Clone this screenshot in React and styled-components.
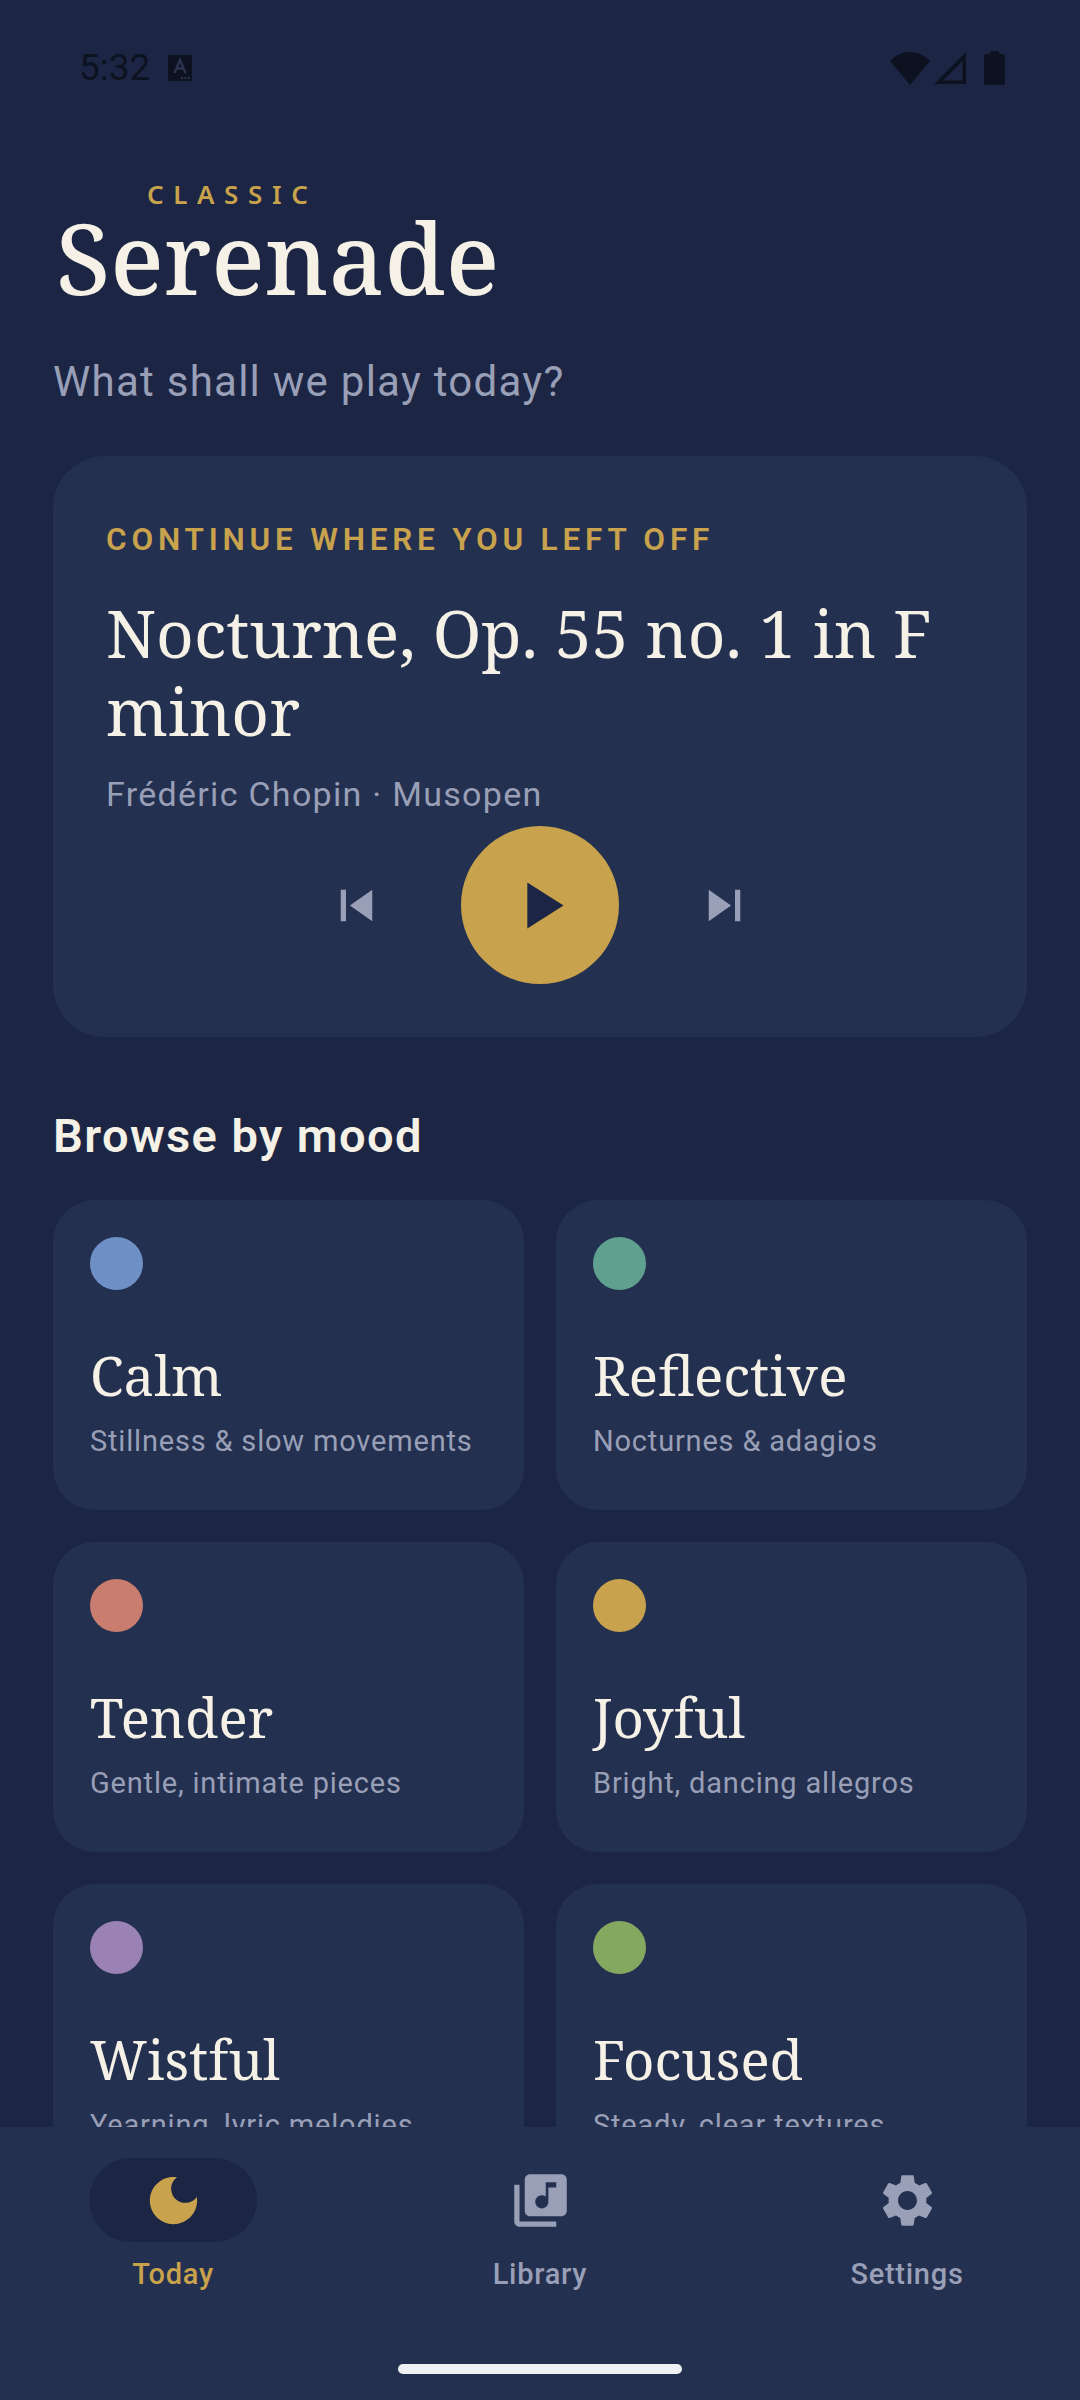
import React from 'react';
import styled, { createGlobalStyle } from 'styled-components';

const GlobalStyle = createGlobalStyle`
    html, body { margin: 0; padding: 0; background: #1c2644; }
    * { box-sizing: border-box; }
`;

const SERIF = `"Noto Serif", "DejaVu Serif", serif`;
const SANS = `Roboto, "Noto Sans", sans-serif`;
const GOLD = '#c8a24c';
const CREAM = '#f5f1e6';
const MUTED = '#989fb6';
const BG = '#1c2644';
const PANEL = '#243050';

const Screen = styled.div`
    width: 1080px;
    height: 2400px;
    background: ${BG};
    display: flex;
    flex-direction: column;
    overflow: hidden;
    font-family: ${SANS};
`;

const Scroll = styled.div`
    flex: 1;
    min-height: 0;
    overflow: hidden;
    padding: 0 53px;
`;

const StatusBar = styled.div`
    height: 179px;
    margin: 0 -53px;
    padding: 46px 75px 0 79px;
    display: flex;
    justify-content: space-between;
    align-items: flex-start;
    color: #0d1220;
`;

const StatusLeft = styled.div`
    display: flex;
    align-items: center;
    gap: 18px;
    font-size: 37px;
    line-height: 44px;
`;

const StatusRight = styled.div`
    padding-top: 5px;
    display: flex;
    align-items: center;
`;

const Eyebrow = styled.div`
    margin-left: 94px;
    font-family: "Noto Sans", Roboto, sans-serif;
    font-size: 26px;
    line-height: 31px;
    font-weight: 600;
    letter-spacing: 0.37em;
    color: ${GOLD};
`;

const Title = styled.h1`
    margin: 2px 0 0 3px;
    font-family: ${SERIF};
    font-weight: 500;
    font-size: 98px;
    line-height: 90px;
    color: ${CREAM};
`;

const Subtitle = styled.p`
    margin: 52px 0 0;
    font-size: 42px;
    line-height: 56px;
    letter-spacing: 0.03em;
    color: ${MUTED};
`;

const HeroCard = styled.section`
    margin-top: 46px;
    height: 581px;
    padding: 63px 53px 0;
    background: ${PANEL};
    border-radius: 52px;
`;

const HeroLabel = styled.div`
    font-size: 31.5px;
    line-height: 42px;
    font-weight: 600;
    letter-spacing: 0.152em;
    color: ${GOLD};
`;

const HeroTitle = styled.h2`
    margin: 33px 0 0;
    font-family: ${SERIF};
    font-weight: 400;
    font-size: 65.6px;
    line-height: 78px;
    color: ${CREAM};
`;

const HeroMeta = styled.div`
    margin-top: 21px;
    font-size: 34px;
    line-height: 46px;
    letter-spacing: 0.038em;
    color: ${MUTED};
`;

const Controls = styled.div`
    margin-top: 9px;
    display: flex;
    justify-content: center;
    align-items: center;
    gap: 42px;
`;

const SkipButton = styled.div`
    width: 126px;
    height: 126px;
    display: flex;
    align-items: center;
    justify-content: center;
    color: ${MUTED};
`;

const PlayButton = styled.div`
    width: 158px;
    height: 158px;
    border-radius: 50%;
    background: ${GOLD};
    color: ${BG};
    display: flex;
    align-items: center;
    justify-content: center;
`;

const SectionTitle = styled.h3`
    margin: 69px 0 0;
    font-size: 47px;
    line-height: 60px;
    font-weight: 600;
    letter-spacing: 0.03em;
    color: ${CREAM};
`;

const MoodGrid = styled.div`
    margin-top: 34px;
    display: grid;
    grid-template-columns: 1fr 1fr;
    gap: 32px;
`;

const MoodCard = styled.div`
    height: 310px;
    padding: 37px;
    background: ${PANEL};
    border-radius: 42px;
`;

const Dot = styled.div`
    width: 53px;
    height: 53px;
    border-radius: 50%;
    background: ${p => p.$color};
`;

const MoodName = styled.div`
    margin-top: 50px;
    font-family: ${SERIF};
    font-size: 54.5px;
    line-height: 70px;
    color: ${CREAM};
`;

const MoodHint = styled.div`
    margin-top: 11px;
    font-size: 29px;
    line-height: 40px;
    letter-spacing: 0.028em;
    color: ${MUTED};
`;

const BottomNav = styled.nav`
    flex: none;
    height: 273px;
    background: ${PANEL};
    display: flex;
    flex-direction: column;
`;

const NavRow = styled.div`
    padding: 31px 89px 0;
    display: flex;
    justify-content: space-between;
`;

const NavItem = styled.div`
    width: 168px;
    display: flex;
    flex-direction: column;
    align-items: center;
    color: ${p => (p.$active ? GOLD : MUTED)};
`;

const IconPill = styled.div`
    width: 168px;
    height: 84px;
    border-radius: 42px;
    background: ${p => (p.$active ? BG : 'transparent')};
    display: flex;
    align-items: center;
    justify-content: center;
`;

const NavLabel = styled.div`
    margin-top: 12px;
    white-space: nowrap;
    font-size: 29px;
    line-height: 40px;
    font-weight: 500;
    letter-spacing: 0.025em;
`;

const HomeBar = styled.div`
    width: 284px;
    height: 10px;
    margin: 70px auto 0;
    border-radius: 5px;
    background: #eff1f3;
`;

const Icon = ({ size = 63, d }) => (
    <svg width={size} height={size} viewBox="0 0 24 24" fill="currentColor"><path d={d} /></svg>
);

const ICONS = {
    prev: 'M6 6h2v12H6zm3.5 6l8.5 6V6z',
    next: 'M6 18l8.5-6L6 6v12zM16 6v12h2V6h-2z',
    play: 'M8 5v14l11-7z',
    moon: 'M12 3c-4.97 0-9 4.03-9 9s4.03 9 9 9 9-4.03 9-9c0-.46-.04-.92-.1-1.36-.98 1.37-2.58 2.26-4.4 2.26-2.98 0-5.4-2.42-5.4-5.4 0-1.81.89-3.42 2.26-4.4-.44-.06-.9-.1-1.36-.1z',
    library: 'M20 2H8c-1.1 0-2 .9-2 2v12c0 1.1.9 2 2 2h12c1.1 0 2-.9 2-2V4c0-1.1-.9-2-2-2zm-2 5h-3v5.5c0 1.38-1.12 2.5-2.5 2.5S10 13.88 10 12.5s1.12-2.5 2.5-2.5c.57 0 1.08.19 1.5.51V5h4v2zM4 6H2v14c0 1.1.9 2 2 2h14v-2H4V6z',
    settings: 'M19.14 12.94c.04-.3.06-.61.06-.94 0-.32-.02-.64-.07-.94l2.03-1.58c.18-.14.23-.41.12-.61l-1.92-3.32c-.12-.22-.37-.29-.59-.22l-2.39.96c-.5-.38-1.03-.7-1.62-.94L14.4 2.81c-.04-.24-.24-.41-.48-.41h-3.84c-.24 0-.43.17-.47.41L9.25 5.35c-.59.24-1.13.57-1.62.94l-2.39-.96c-.22-.08-.47 0-.59.22L2.74 8.87c-.12.21-.08.47.12.61l2.03 1.58c-.05.3-.09.63-.09.94s.02.64.07.94l-2.03 1.58c-.18.14-.23.41-.12.61l1.92 3.32c.12.22.37.29.59.22l2.39-.96c.5.38 1.03.7 1.62.94l.36 2.54c.05.24.24.41.48.41h3.84c.24 0 .44-.17.47-.41l.36-2.54c.59-.24 1.13-.56 1.62-.94l2.39.96c.22.08.47 0 .59-.22l1.92-3.32c.12-.22.07-.47-.12-.61l-2.01-1.58zM12 15.6c-1.98 0-3.6-1.62-3.6-3.6s1.62-3.6 3.6-3.6 3.6 1.62 3.6 3.6-1.62 3.6-3.6 3.6z',
};

const moods = [
    { name: 'Calm', hint: 'Stillness & slow movements', color: '#6f8fc7' },
    { name: 'Reflective', hint: 'Nocturnes & adagios', color: '#5fa08f' },
    { name: 'Tender', hint: 'Gentle, intimate pieces', color: '#c97d6e' },
    { name: 'Joyful', hint: 'Bright, dancing allegros', color: '#c8a24c' },
    { name: 'Wistful', hint: 'Yearning, lyric melodies', color: '#9a82b5' },
    { name: 'Focused', hint: 'Steady, clear textures', color: '#84a860' },
];

const tabs = [
    { label: 'Today', icon: ICONS.moon, active: true },
    { label: 'Library', icon: ICONS.library },
    { label: 'Settings', icon: ICONS.settings },
];

const KeyboardBadge = () => (
    <svg width="24" height="26" viewBox="0 0 24 26">
        <rect width="24" height="26" rx="2" fill="currentColor" />
        <path d="M6.5 18 L12 5 L17.5 18 M8.5 13.5 H15.5" fill="none" stroke="#2a3450" strokeWidth="2.4" />
        <path d="M13 23h2M16.5 23h2M20 23h2" stroke="#2a3450" strokeWidth="2" />
    </svg>
);

const StatusIcons = () => (
    <StatusRight>
        <svg width="40" height="33" viewBox="0 0 40 33"><path d="M0 9 C11 -3 29 -3 40 9 L20 33 Z" fill="currentColor" /></svg>
        <svg width="32" height="32" viewBox="0 0 32 32" style={{ marginLeft: 4 }}><path fillRule="evenodd" d="M32 0 V32 H0 Z M28.5 9 L9 28.5 H28.5 Z" fill="currentColor" /></svg>
        <svg width="21" height="34" viewBox="0 0 21 34" style={{ marginLeft: 18 }}><path d="M6 0 H15 V3 H19 A2 2 0 0 1 21 5 V32 A2 2 0 0 1 19 34 H2 A2 2 0 0 1 0 32 V5 A2 2 0 0 1 2 3 H6 Z" fill="currentColor" /></svg>
    </StatusRight>
);

export default function App() {
    return (
        <Screen>
            <GlobalStyle />
            <Scroll>
                <StatusBar>
                    <StatusLeft>5:32 <KeyboardBadge /></StatusLeft>
                    <StatusIcons />
                </StatusBar>
                <Eyebrow>CLASSIC</Eyebrow>
                <Title>Serenade</Title>
                <Subtitle>What shall we play today?</Subtitle>
                <HeroCard>
                    <HeroLabel>CONTINUE WHERE YOU LEFT OFF</HeroLabel>
                    <HeroTitle>Nocturne, Op. 55 no. 1 in F minor</HeroTitle>
                    <HeroMeta>Frédéric Chopin · Musopen</HeroMeta>
                    <Controls>
                        <SkipButton><Icon d={ICONS.prev} /></SkipButton>
                        <PlayButton><Icon size={79} d={ICONS.play} /></PlayButton>
                        <SkipButton><Icon d={ICONS.next} /></SkipButton>
                    </Controls>
                </HeroCard>
                <SectionTitle>Browse by mood</SectionTitle>
                <MoodGrid>
                    {moods.map(m => (
                        <MoodCard key={m.name}>
                            <Dot $color={m.color} />
                            <MoodName>{m.name}</MoodName>
                            <MoodHint>{m.hint}</MoodHint>
                        </MoodCard>
                    ))}
                </MoodGrid>
            </Scroll>
            <BottomNav>
                <NavRow>
                    {tabs.map(t => (
                        <NavItem key={t.label} $active={t.active}>
                            <IconPill $active={t.active}><Icon d={t.icon} /></IconPill>
                            <NavLabel>{t.label}</NavLabel>
                        </NavItem>
                    ))}
                </NavRow>
                <HomeBar />
            </BottomNav>
        </Screen>
    );
}
